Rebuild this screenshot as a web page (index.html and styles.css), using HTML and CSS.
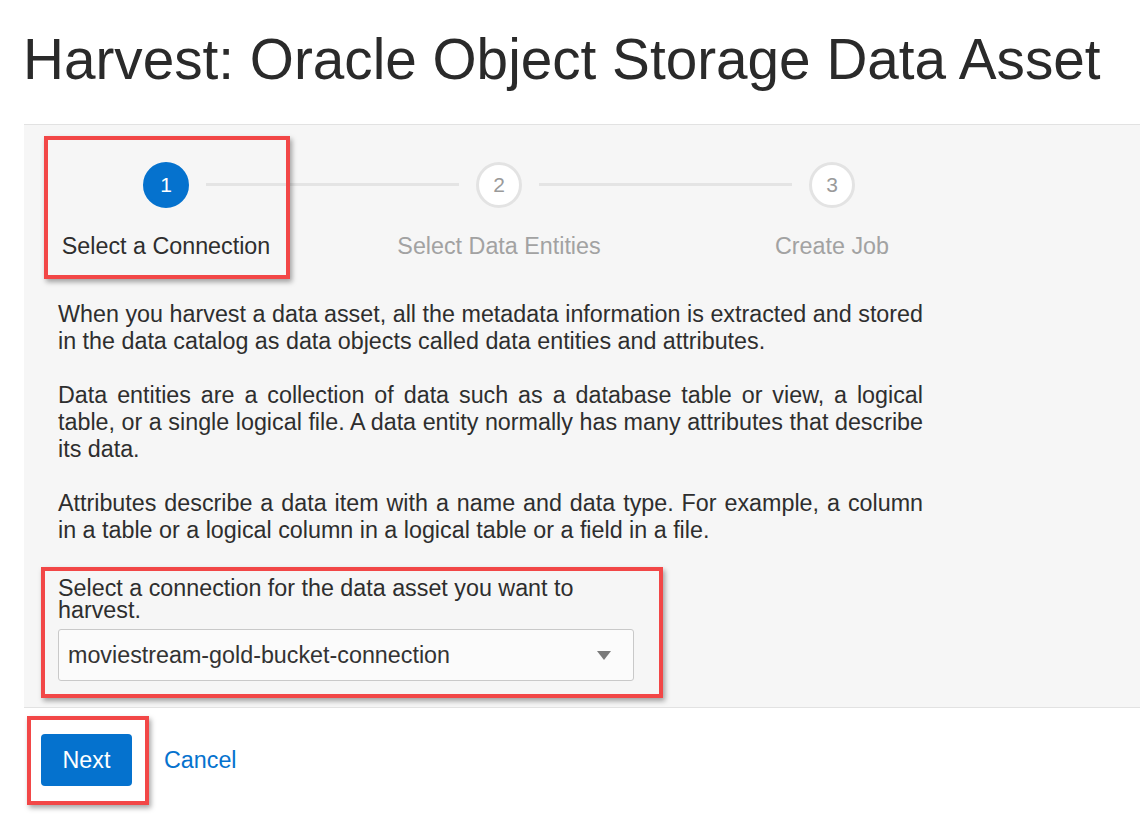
FILE: index.html
```html
<!DOCTYPE html>
<html lang="en">
<head>
<meta charset="utf-8">
<title>Harvest: Oracle Object Storage Data Asset</title>
<link rel="stylesheet" href="styles.css">
</head>
<body>
<h1 class="title">Harvest: Oracle Object Storage Data Asset</h1>
<section class="panel">
  <div class="stepper">
    <div class="step step-active">
      <div class="circle">1</div>
      <div class="step-label">Select a Connection</div>
      <div class="mark mark-step"></div>
    </div>
    <div class="connector"></div>
    <div class="step">
      <div class="circle">2</div>
      <div class="step-label">Select Data Entities</div>
    </div>
    <div class="connector"></div>
    <div class="step">
      <div class="circle">3</div>
      <div class="step-label">Create Job</div>
    </div>
  </div>
  <div class="intro">
    <p>When you harvest a data asset, all the metadata information is extracted and stored in the data catalog as data objects called data entities and attributes.</p>
    <p>Data entities are a collection of data such as a database table or view, a logical table, or a single logical file. A data entity normally has many attributes that describe its data.</p>
    <p>Attributes describe a data item with a name and data type. For example, a column in a table or a logical column in a logical table or a field in a file.</p>
  </div>
  <div class="field">
    <label class="field-label">Select a connection for the data asset you want to harvest.</label>
    <div class="select">
      <span class="select-value">moviestream-gold-bucket-connection</span>
      <span class="select-arrow"></span>
    </div>
    <div class="mark mark-field"></div>
  </div>
</section>
<footer class="footer">
  <div class="btn-wrap">
    <button class="btn-primary">Next</button>
    <div class="mark mark-btn"></div>
  </div>
  <a class="link" href="#">Cancel</a>
</footer>
</body>
</html>
```
FILE: styles.css
```css
* { box-sizing: border-box; }
html, body { margin: 0; padding: 0; background: #ffffff; }
body {
  font-family: "Liberation Sans", Arial, sans-serif;
  color: #2e2e2e;
  width: 1140px;
  height: 816px;
  overflow: hidden;
}
.title {
  margin: 28px 0 32px 23px;
  font-size: 56.7px;
  line-height: 64px;
  font-weight: 400;
  color: #2a2a2a;
  white-space: nowrap;
}
.panel {
  margin-left: 24px;
  background: #f6f6f6;
  border-top: 1px solid #e2e2e2;
  border-bottom: 1px solid #e2e2e2;
  padding: 37px 0 26px 34px;
}
.stepper {
  display: flex;
  align-items: flex-start;
  margin-left: 85px;
  width: 712px;
}
.step {
  position: relative;
  width: 46px;
  flex: 0 0 46px;
  display: flex;
  flex-direction: column;
  align-items: center;
}
.circle {
  width: 46px;
  height: 46px;
  border-radius: 50%;
  background: #ffffff;
  border: 3px solid #e3e3e3;
  color: #9a9a9a;
  font-size: 21px;
  display: flex;
  align-items: center;
  justify-content: center;
}
.step-active .circle {
  background: #0572ce;
  border-color: #0572ce;
  color: #ffffff;
}
.step-label {
  margin-top: 25px;
  font-size: 23.3px;
  line-height: 27px;
  white-space: nowrap;
  color: #a2a2a2;
}
.step-active .step-label { color: #2e2e2e; }
.connector {
  flex: 1 1 auto;
  height: 3px;
  background: #e4e4e4;
  margin: 21px 17px 0;
}
.mark {
  position: absolute;
  border: 4px solid #f24747;
  box-shadow: 2px 3px 5px rgba(0,0,0,0.35);
  pointer-events: none;
}
.mark-step {
  left: -99px;
  top: -26px;
  width: 246px;
  height: 143px;
}
.intro {
  margin-top: 41px;
  width: 865px;
  font-size: 23.3px;
  line-height: 27px;
  text-align: justify;
  color: #2e2e2e;
}
.intro p { margin: 0 0 27px; }
.intro p:last-child { margin-bottom: 0; }
.field {
  position: relative;
  margin-top: 33px;
  width: 576px;
}
.field-label {
  display: block;
  width: 540px;
  font-size: 23.3px;
  line-height: 22px;
  color: #2e2e2e;
}
.select {
  margin-top: 8px;
  height: 52px;
  background: #fbfbfb;
  border: 1px solid #c9c9c9;
  border-radius: 3px;
  display: flex;
  align-items: center;
  justify-content: space-between;
  padding: 0 22px 0 9px;
}
.select-value {
  font-size: 23.3px;
  color: #333333;
}
.select-arrow {
  width: 0;
  height: 0;
  border-left: 7.5px solid transparent;
  border-right: 7.5px solid transparent;
  border-top: 9px solid #7a7a7a;
}
.mark-field {
  left: -17px;
  top: -10px;
  width: 622px;
  height: 131px;
}
.footer {
  display: flex;
  align-items: center;
  gap: 32px;
  padding: 26px 0 0 41px;
}
.btn-wrap { position: relative; }
.btn-primary {
  display: block;
  width: 91px;
  height: 52px;
  border: none;
  border-radius: 4px;
  background: #0572ce;
  color: #ffffff;
  font-family: "Liberation Sans", Arial, sans-serif;
  font-size: 23.3px;
  padding: 0;
}
.mark-btn {
  left: -14px;
  top: -18px;
  width: 122px;
  height: 89px;
}
.link {
  font-size: 23.3px;
  color: #0572ce;
  text-decoration: none;
}
```
